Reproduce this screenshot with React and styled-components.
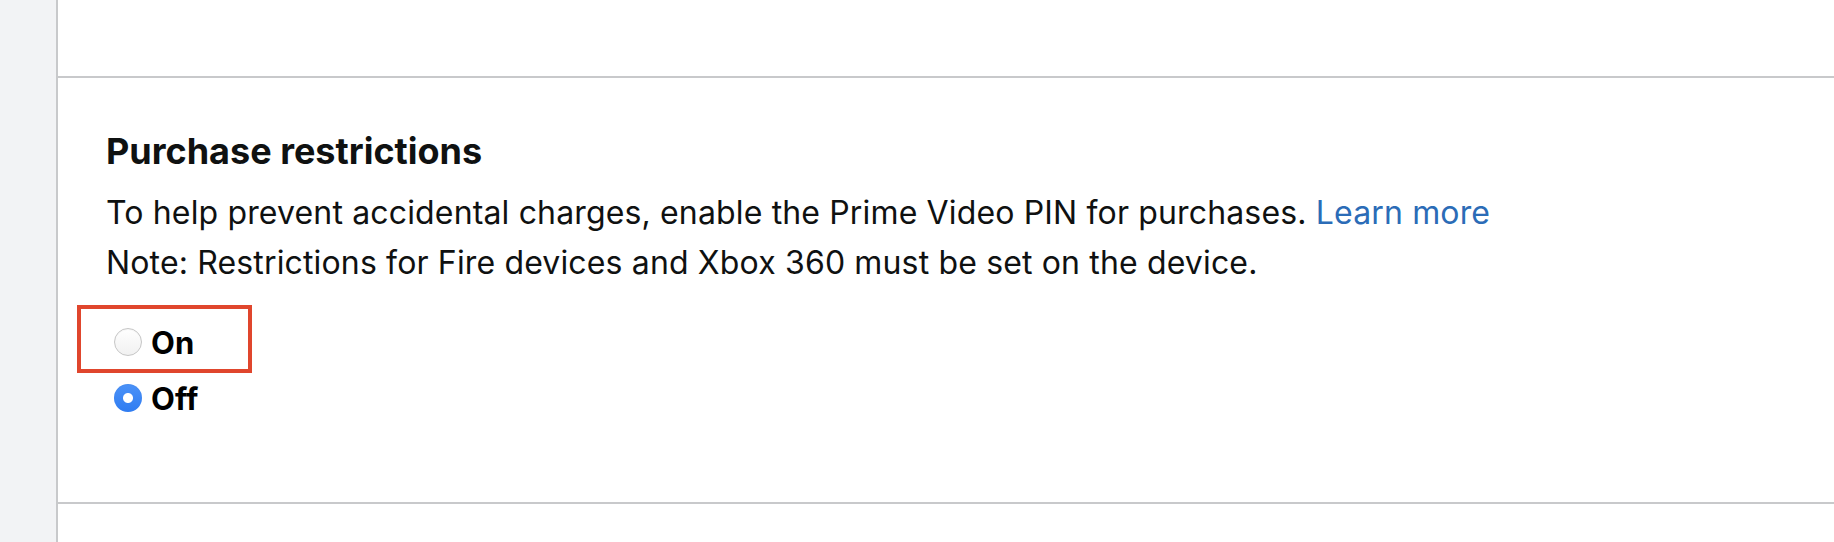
import React, { useState } from "react";
import styled, { createGlobalStyle } from "styled-components";

const Global = createGlobalStyle`
  html, body { margin: 0; padding: 0; background: #ffffff; }
  body { font-family: Inter, "Liberation Sans", Arial, sans-serif; color: #0f1111; }
`;

const Page = styled.div`
  display: flex;
  min-height: 542px;
  width: 100%;
`;

const Sidebar = styled.aside`
  width: 56px;
  flex: 0 0 56px;
  background: #f2f3f5;
  border-right: 2px solid #c8c9cb;
`;

const Main = styled.main`
  flex: 1;
  display: flex;
  flex-direction: column;
  background: #ffffff;
`;

const TopSection = styled.div`
  height: 76px;
  border-bottom: 2px solid #c8c9cb;
`;

const Section = styled.section`
  padding: 51px 48px 76px 48px;
  border-bottom: 2px solid #c8c9cb;
`;

const Title = styled.h2`
  margin: 0;
  font-size: 36px;
  line-height: 44px;
  font-weight: 700;
  color: #0f1111;
`;

const Body = styled.p`
  margin: 15px 0 0 0;
  font-size: 32px;
  line-height: 50px;
  letter-spacing: 0.15px;
  color: #0f1111;
`;

const Link = styled.a`
  color: #2b6cb7;
  text-decoration: none;
`;

const RadioList = styled.div`
  display: flex;
  flex-direction: column;
  margin-top: 26px;
  padding-left: 8px;
`;

const Row = styled.label`
  position: relative;
  display: flex;
  align-items: center;
  gap: 9px;
  height: 56px;
  font-size: 31px;
  font-weight: 700;
  color: #000;
  cursor: pointer;
  width: max-content;

  ${(p) =>
    p.$highlight &&
    `
    &::after {
      content: "";
      position: absolute;
      left: -37px;
      top: -9px;
      width: 175px;
      height: 68px;
      box-sizing: border-box;
      border: 4px solid #e0462d;
      pointer-events: none;
    }
  `}
`;

const Radio = styled.input.attrs({ type: "radio" })`
  appearance: none;
  -webkit-appearance: none;
  margin: 0;
  width: 28px;
  height: 28px;
  border-radius: 50%;
  box-sizing: border-box;
  border: 1px solid #c6c6c6;
  background: linear-gradient(#ffffff, #f1f1f1);
  box-shadow: inset 0 1px 1px rgba(0, 0, 0, 0.04);
  flex: 0 0 28px;

  &:checked {
    border: none;
    background: radial-gradient(circle, #ffffff 0 4.5px, transparent 5.5px),
      linear-gradient(#4b92f8, #2f7cf1);
  }
`;

export default function App() {
  const [value, setValue] = useState("off");
  return (
    <>
      <Global />
      <Page>
        <Sidebar />
        <Main>
          <TopSection />
          <Section>
            <Title>Purchase restrictions</Title>
            <Body>
              To help prevent accidental charges, enable the Prime Video PIN for
              purchases. <Link href="#">Learn more</Link>
              <br />
              Note: Restrictions for Fire devices and Xbox 360 must be set on the
              device.
            </Body>
            <RadioList>
              <Row $highlight>
                <Radio
                  name="purchase"
                  checked={value === "on"}
                  onChange={() => setValue("on")}
                />
                On
              </Row>
              <Row>
                <Radio
                  name="purchase"
                  checked={value === "off"}
                  onChange={() => setValue("off")}
                />
                Off
              </Row>
            </RadioList>
          </Section>
        </Main>
      </Page>
    </>
  );
}
